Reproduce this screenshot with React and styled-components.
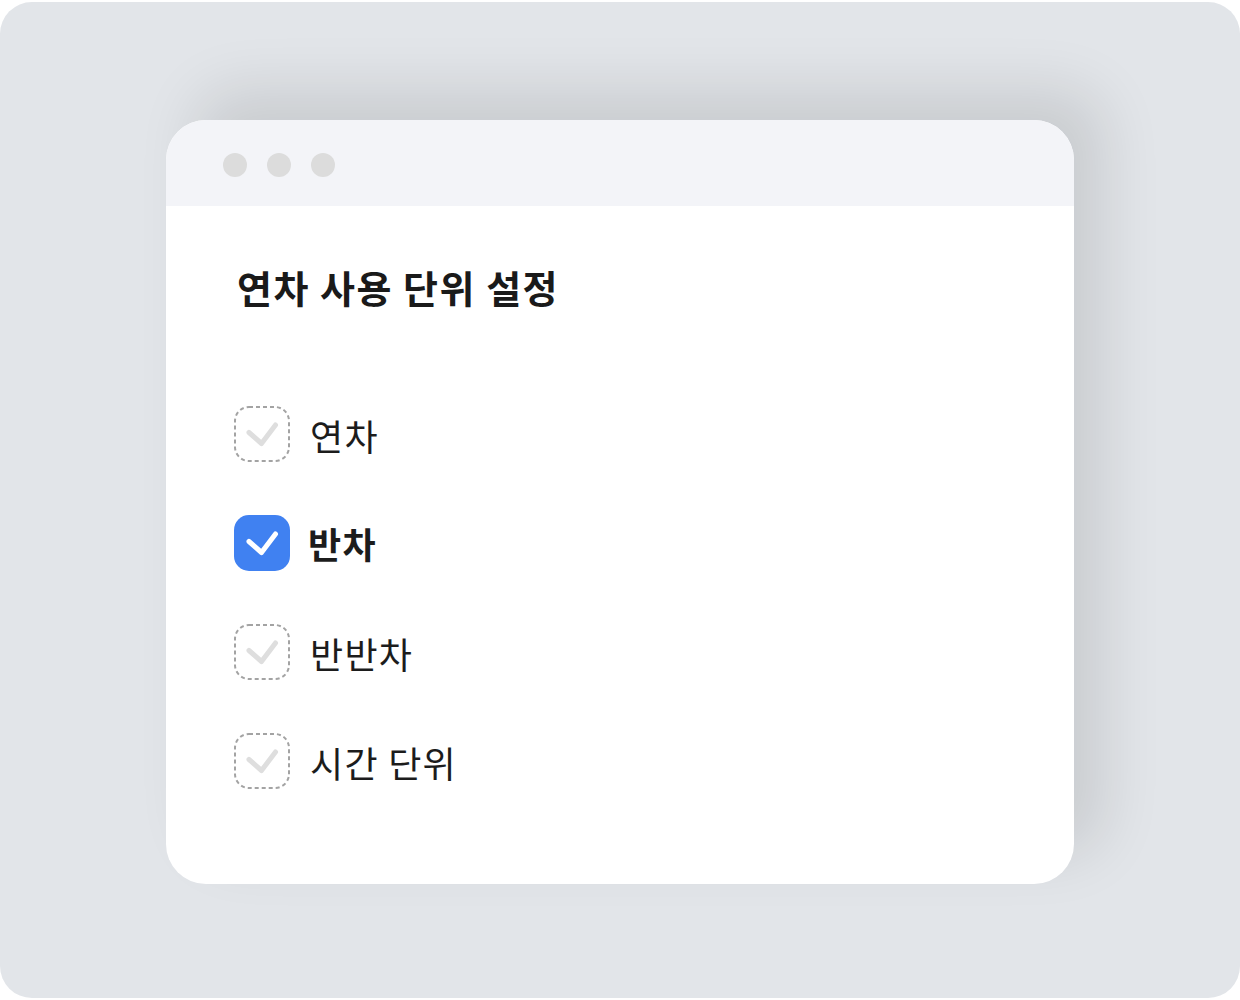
import React from "react";
import styled, { createGlobalStyle } from "styled-components";

const GlobalStyle = createGlobalStyle`
  html, body {
    margin: 0;
    padding: 0;
    background: #ffffff;
  }
  body {
    font-family: "Noto Sans CJK KR", "Noto Sans", sans-serif;
    color: #1a1a1a;
  }
`;

const options = [
  { label: "연차", checked: false },
  { label: "반차", checked: true },
  { label: "반반차", checked: false },
  { label: "시간 단위", checked: false },
];

const CheckIcon = ({ checked }) => (
  <svg width="56" height="56" viewBox="0 0 56 56">
    {checked ? (
      <rect x="0" y="0" width="56" height="56" rx="15" fill="#4081f1" />
    ) : (
      <rect
        x="1"
        y="1"
        width="54"
        height="54"
        rx="14"
        fill="none"
        stroke="#a3a3a3"
        strokeWidth="2"
        strokeDasharray="4 3"
      />
    )}
    <path
      d="M15 26.5 L27.5 37.5 L41.5 19"
      fill="none"
      stroke={checked ? "#ffffff" : "#dedede"}
      strokeWidth="5"
      strokeLinecap="round"
      strokeLinejoin="round"
    />
  </svg>
);

const App = () => {
  return (
    <>
      <GlobalStyle />
      <Stage>
        <Window>
          <TitleBar>
            <Dot />
            <Dot />
            <Dot />
          </TitleBar>
          <Body>
            <Title>연차 사용 단위 설정</Title>
            <OptionList>
              {options.map((o) => (
                <Option key={o.label}>
                  <CheckIcon checked={o.checked} />
                  <Label $checked={o.checked}>{o.label}</Label>
                </Option>
              ))}
            </OptionList>
          </Body>
        </Window>
      </Stage>
    </>
  );
};

const Stage = styled.div`
  box-sizing: border-box;
  width: 1240px;
  height: 996px;
  margin-top: 2px;
  padding: 118px 0 0 166px;
  border-radius: 32px;
  background: #e2e5e9;
  overflow: hidden;
`;

const Window = styled.div`
  width: 908px;
  height: 764px;
  border-radius: 40px;
  background: #ffffff;
  overflow: hidden;
  box-shadow: 30px -30px 60px rgba(0, 0, 0, 0.11);
  display: flex;
  flex-direction: column;
`;

const TitleBar = styled.div`
  box-sizing: border-box;
  height: 86px;
  background: #f3f4f8;
  display: flex;
  align-items: center;
  gap: 20px;
  padding: 4px 0 0 57px;
  flex-shrink: 0;
`;

const Dot = styled.span`
  width: 24px;
  height: 24px;
  border-radius: 50%;
  background: #dcdcdc;
`;

const Body = styled.div`
  padding: 62px 0 0 68px;
`;

const Title = styled.h1`
  margin: 0 0 0 3px;
  font-size: 38px;
  line-height: 38px;
  font-weight: 700;
  letter-spacing: 1.5px;
  color: #1a1a1a;
`;

const OptionList = styled.ul`
  list-style: none;
  margin: 100px 0 0;
  padding: 0;
  display: flex;
  flex-direction: column;
  gap: 53px;
`;

const Option = styled.li`
  display: flex;
  align-items: center;
  gap: 20px;
  height: 56px;

  svg {
    flex-shrink: 0;
    display: block;
  }
`;

const Label = styled.span`
  font-size: 36px;
  line-height: 56px;
  letter-spacing: 1.3px;
  font-weight: ${({ $checked }) => ($checked ? 700 : 400)};
  margin: ${({ $checked }) => ($checked ? "0 0 0 -2px" : "2px 0 0")};
  color: #1c1c1c;
`;

export default App;
